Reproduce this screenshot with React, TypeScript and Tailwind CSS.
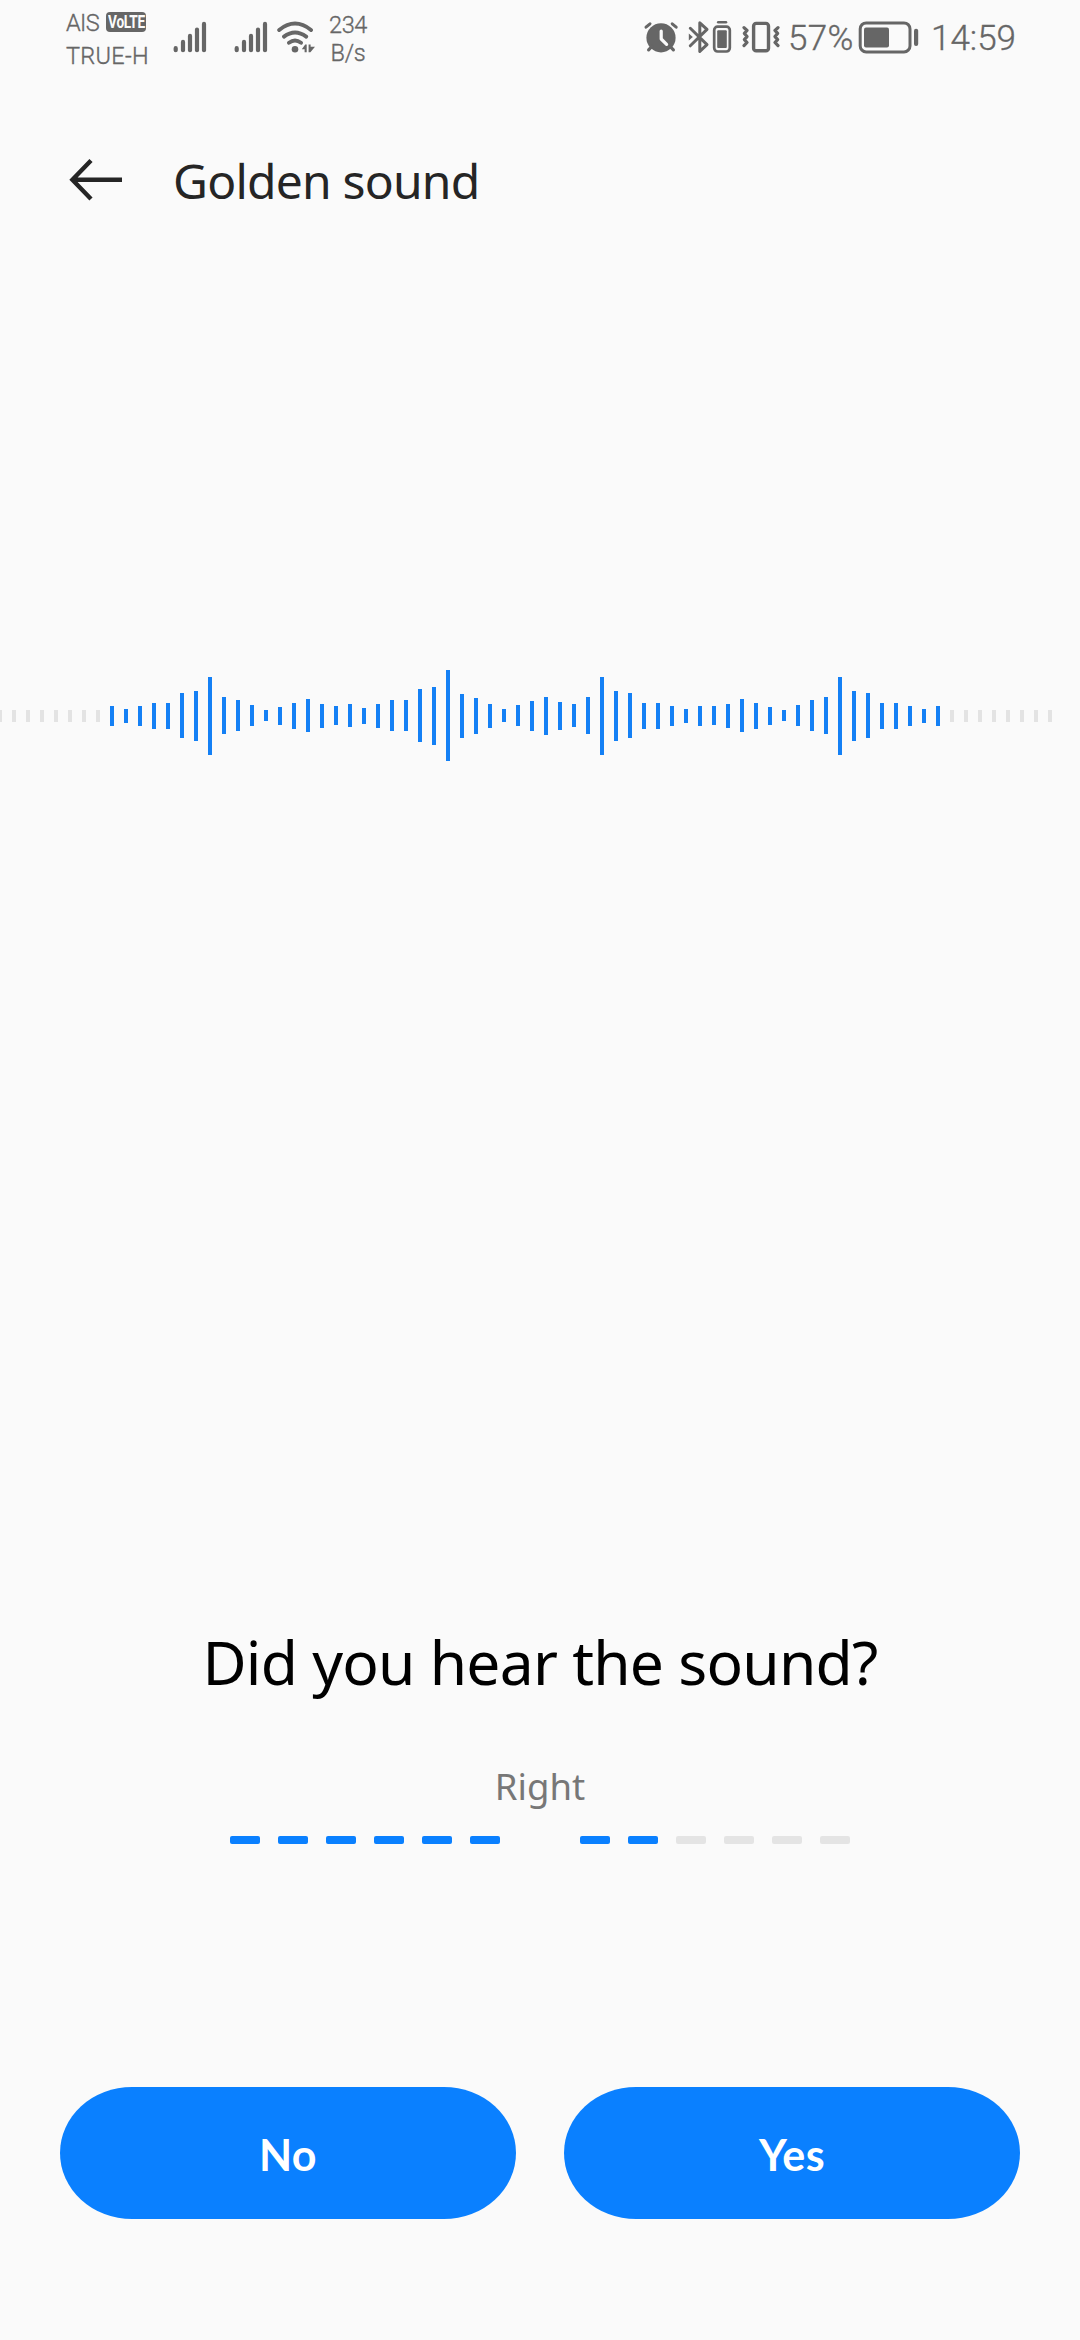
// [top, height] of every active bar, left to right
const bars = [
  [46, 20], [49, 14], [46, 20], [43, 26], [43, 26], [33, 45], [31, 50], [17, 78], [37, 37], [40, 31],
  [45, 21], [50, 11], [47, 18], [43, 26], [39, 33], [44, 24], [46, 19], [44, 23], [48, 16], [44, 24],
  [40, 31], [40, 31], [29, 53], [27, 58], [10, 91], [34, 44], [38, 36], [44, 24], [49, 13], [45, 21],
  [41, 30], [37, 38], [42, 28], [44, 23], [37, 37], [17, 78], [31, 50], [33, 45], [43, 26], [43, 26],
  [46, 20], [49, 14], [46, 20], [46, 19], [44, 24], [39, 33], [43, 26], [47, 18], [50, 11], [45, 21],
  [40, 31], [37, 37], [17, 78], [31, 50], [33, 45], [43, 26], [43, 26], [46, 20], [49, 14], [46, 20],
];

const idle = [0, 1, 2, 3, 4, 5, 6, 7];

const ears = [
  { id: "left", total: 6, done: 6 },
  { id: "right", total: 6, done: 2 },
];

function Signal({ className }: { className?: string }) {
  return (
    <svg viewBox="173 0 34 80" className={`w-[34px] h-20 shrink-0 ${className ?? ""}`} stroke="#666" strokeWidth="4.2" strokeLinecap="round">
      <path d="M175.7 48.2v2M183 41.9v8.3M190 35.9v14.3M197 29.5v20.7M204 23.9v26.3" />
    </svg>
  );
}

function Wifi() {
  return (
    <svg viewBox="277 0 38 80" className="w-[38px] h-20 shrink-0 ml-[9px]" fill="none" stroke="#666" strokeWidth="3.9" strokeLinecap="round">
      <path d="M279.2 30Q295 17.2 311 30M284 36.6Q295 28.2 306.2 36.6M289 42.8Q295 38.4 301 42.8" />
      <circle cx="295" cy="49.2" r="3.3" fill="#666" stroke="none" />
      <path d="M301.8 49.3L305.2 44.6H306.7V52.3H304.6V49.3ZM308.6 44.6H310.6V46.7H315L310.4 52.3H308.6Z" fill="#666" stroke="none" />
    </svg>
  );
}

function StatusBar() {
  return (
    <div className="flex h-20 items-start font-['Roboto',sans-serif] font-light [-webkit-text-stroke:0.35px] text-[#666] whitespace-nowrap">
      <div className="w-[107px] ml-[66px] pt-[7px] text-[23.5px] leading-[33px]">
        <div className="flex items-center">
          <span className="tracking-[-0.6px]">AIS</span>
          <span className="flex w-10 h-5 ml-[7px] -mt-1 items-center justify-center rounded bg-[#666] [-webkit-text-stroke:0px]">
            <span className="text-[19px] leading-5 font-bold text-[#fbfbfb] tracking-[-0.5px] scale-x-[0.72]">VoLTE</span>
          </span>
        </div>
        <div className="tracking-[0.3px]">TRUE-H</div>
      </div>
      <Signal />
      <Signal className="ml-[27px]" />
      <Wifi />
      <div className="w-[40px] ml-[13px] pt-[11px] text-center text-[23.5px] leading-[28px] tracking-[-0.3px]">
        <div>234</div>
        <div>B/s</div>
      </div>

      <div className="flex ml-auto mr-[62px]">
        {/* alarm */}
        <svg viewBox="643 0 36 80" className="w-9 h-20" fill="none" stroke="#666" strokeLinecap="round" strokeLinejoin="round">
          <circle cx="661" cy="37.8" r="14.6" fill="#666" stroke="none" />
          <path d="M646 27.2L650 23.8M672.2 23.8L676.2 27.2" strokeWidth="3" />
          <path d="M648.6 49.8L652 46.4M673.4 49.8L670 46.4" strokeWidth="3.2" />
          <path d="M661.2 31V39L666.6 44.4" stroke="#fafafa" strokeWidth="3.2" />
        </svg>
        {/* bluetooth with device battery */}
        <svg viewBox="688 0 44 80" className="w-11 h-20 ml-[9px]" fill="none" stroke="#666" strokeLinecap="round" strokeLinejoin="round">
          <path d="M690.3 28.3L707 44.6L699.8 51.4V22.8L707 29.4L690.3 45.8" strokeWidth="3" />
          <path d="M688.8 33.6L692.8 37L688.8 40.6Z" fill="#666" stroke="none" />
          <rect x="714.2" y="26.7" width="15.6" height="24.8" rx="3.4" strokeWidth="2.7" />
          <rect x="717.2" y="30.2" width="9.6" height="17.8" rx="1" fill="#666" stroke="none" />
          <path d="M718.2 22.2H726" strokeWidth="2.5" />
        </svg>
        {/* vibrate */}
        <svg viewBox="741 0 40 80" className="w-10 h-20 ml-[9px]" fill="none" stroke="#666" strokeLinecap="round" strokeLinejoin="round">
          <rect x="753.6" y="23.4" width="14.9" height="27.4" rx="2.6" strokeWidth="3.4" />
          <path d="M744 27.6L747 30.5L744.4 33.4L747 36.6L744.4 39.6L747 42.5L744 45.6M778 27.6L775 30.5L777.6 33.4L775 36.6L777.6 39.6L775 42.5L778 45.6" strokeWidth="3.2" />
        </svg>
        <span className="w-[68px] pl-[7px] text-[35px] leading-[78px] tracking-[0.3px]">57%</span>
        <svg viewBox="858 0 61 80" className="w-[61px] h-20 ml-[9px]" fill="none">
          <rect x="860.2" y="22.9" width="49.8" height="29" rx="6" stroke="#666" strokeWidth="3" />
          <rect x="864" y="27.4" width="25" height="20" rx="2" fill="#666" />
          <rect x="914" y="28.8" width="4.2" height="17.2" rx="2" fill="#666" />
        </svg>
        <span className="w-[87px] ml-[12px] text-[35px] leading-[78px]">14:59</span>
      </div>
    </div>
  );
}

function Waveform() {
  return (
    <svg viewBox="0 0 1080 110" className="block w-full h-[110px] mt-[380px]" shapeRendering="crispEdges">
      {idle.map(i => <rect key={i} x={i * 14 - 2} y="50" width="4" height="12" fill="#e3e3e3" />)}
      {bars.map(([y, h], i) => <rect key={i} x={110 + i * 14} y={y} width="4" height={h} fill="#1480f5" />)}
      {idle.map(i => <rect key={i} x={950 + i * 14} y="50" width="4" height="12" fill="#e3e3e3" />)}
    </svg>
  );
}

export default function App() {
  return (
    <div className="w-[1080px] h-[2340px] bg-[#fafafa] overflow-hidden font-['Noto_Sans',sans-serif]">
      <StatusBar />

      <header className="flex items-center h-[200px] pl-[69px]">
        <svg viewBox="0 0 54 44" className="w-[54px] h-11" fill="none" stroke="#252525" strokeWidth="4.4">
          <path d="M22 2.5L3.4 21.8L22 41M3.4 21.8H53" />
        </svg>
        <h1 className="ml-[50px] pt-[2px] text-[48px] leading-[58px] tracking-[-0.8px] text-[#252525]">Golden sound</h1>
      </header>

      <Waveform />

      <h2 className="mt-[852px] text-center text-[60.5px] leading-[80px] tracking-[-0.75px] text-black">Did you hear the sound?</h2>
      <p className="mt-[60px] text-center text-[36.5px] leading-[48px] text-[#777]">Right</p>

      <div className="flex justify-center gap-20 mt-[26px]">
        {ears.map(ear => (
          <div key={ear.id} className="flex gap-[18px]">
            {Array.from({ length: ear.total }, (_, i) => (
              <span key={i} className={`w-[30px] h-2 rounded-[2px] ${i < ear.done ? "bg-[#0a80ff]" : "bg-[#e4e4e4]"}`} />
            ))}
          </div>
        ))}
      </div>

      <div className="flex gap-12 px-[60px] mt-[243px]">
        {["No", "Yes"].map(label => (
          <button key={label} className="flex-1 h-[132px] pt-[3px] rounded-[72px_/_66px] bg-[#0a80ff] font-['Lato',sans-serif] text-white text-[43px] leading-[60px] font-bold tracking-[0.4px]">
            {label}
          </button>
        ))}
      </div>
    </div>
  );
}
